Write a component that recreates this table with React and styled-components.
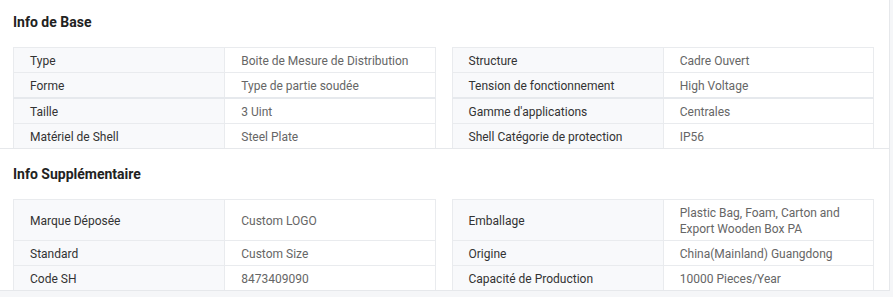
import React from 'react';
import styled, { createGlobalStyle } from 'styled-components';

const GlobalStyle = createGlobalStyle`
  html, body {
    margin: 0;
    padding: 0;
    background: #f5f6f8;
    font-family: Roboto, "Liberation Sans", Arial, sans-serif;
  }
`;

const Panel = styled.div`
  width: 890px;
  background: #fff;
  border-right: 1px solid #e6e8eb;
  box-sizing: border-box;
`;

const Section = styled.section`
  padding: ${(p) => (p.first ? '0' : '3px')} 15px 0 13px;
  border-bottom: 1px solid #e6e8eb;
`;

const Title = styled.h2`
  margin: 0;
  height: 47px;
  display: flex;
  align-items: center;
  font-size: 14px;
  font-weight: 700;
  color: #222;
  padding-bottom: 3px;
  box-sizing: border-box;
`;

const Table = styled.div`
  display: flex;
  flex-direction: column;
`;

const Row = styled.div`
  display: flex;
  gap: 16px;
`;

const Pair = styled.div`
  flex: 1;
  display: grid;
  grid-template-columns: 1fr 1fr;
  border: 1px solid #e9ebee;
  border-top: ${(p) => (p.top ? '1px solid #e9ebee' : 'none')};
  border-bottom: ${(p) => (p.last ? 'none' : p.shade ? '2px solid #e6e9ed' : '1px solid #e9ebee')};
`;

const Cell = styled.div`
  display: flex;
  align-items: center;
  padding: 5px 16px 3px;
  min-height: 16px;
  font-size: 12px;
  line-height: 16px;
  color: ${(p) => (p.label ? '#333' : '#666')};
  background: ${(p) => (p.label ? '#f8f9fb' : '#fff')};
  border-left: ${(p) => (p.label ? 'none' : '1px solid #e9ebee')};
`;

const base = [
  [['Type', 'Boite de Mesure de Distribution'], ['Structure', 'Cadre Ouvert']],
  [['Forme', 'Type de partie soudée'], ['Tension de fonctionnement', 'High Voltage']],
  [['Taille', '3 Uint'], ["Gamme d'applications", 'Centrales']],
  [['Matériel de Shell', 'Steel Plate'], ['Shell Catégorie de protection', 'IP56']],
];

const extra = [
  [['Marque Déposée', 'Custom LOGO'], ['Emballage', 'Plastic Bag, Foam, Carton and Export Wooden Box PA']],
  [['Standard', 'Custom Size'], ['Origine', 'China(Mainland) Guangdong']],
  [['Code SH', '8473409090'], ['Capacité de Production', '10000 Pieces/Year']],
];

function InfoTable({ rows, shadeRow }) {
  return (
    <Table>
      {rows.map((row, i) => (
        <Row key={i}>
          {row.map(([label, value]) => (
            <Pair key={label} top={i === 0} last={i === rows.length - 1} shade={i === shadeRow}>
              <Cell label>{label}</Cell>
              <Cell>{value}</Cell>
            </Pair>
          ))}
        </Row>
      ))}
    </Table>
  );
}

export default function App() {
  return (
    <>
      <GlobalStyle />
      <Panel>
        <Section first>
          <Title>Info de Base</Title>
          <InfoTable rows={base} shadeRow={1} />
        </Section>
        <Section>
          <Title>Info Supplémentaire</Title>
          <InfoTable rows={extra} />
        </Section>
      </Panel>
    </>
  );
}
